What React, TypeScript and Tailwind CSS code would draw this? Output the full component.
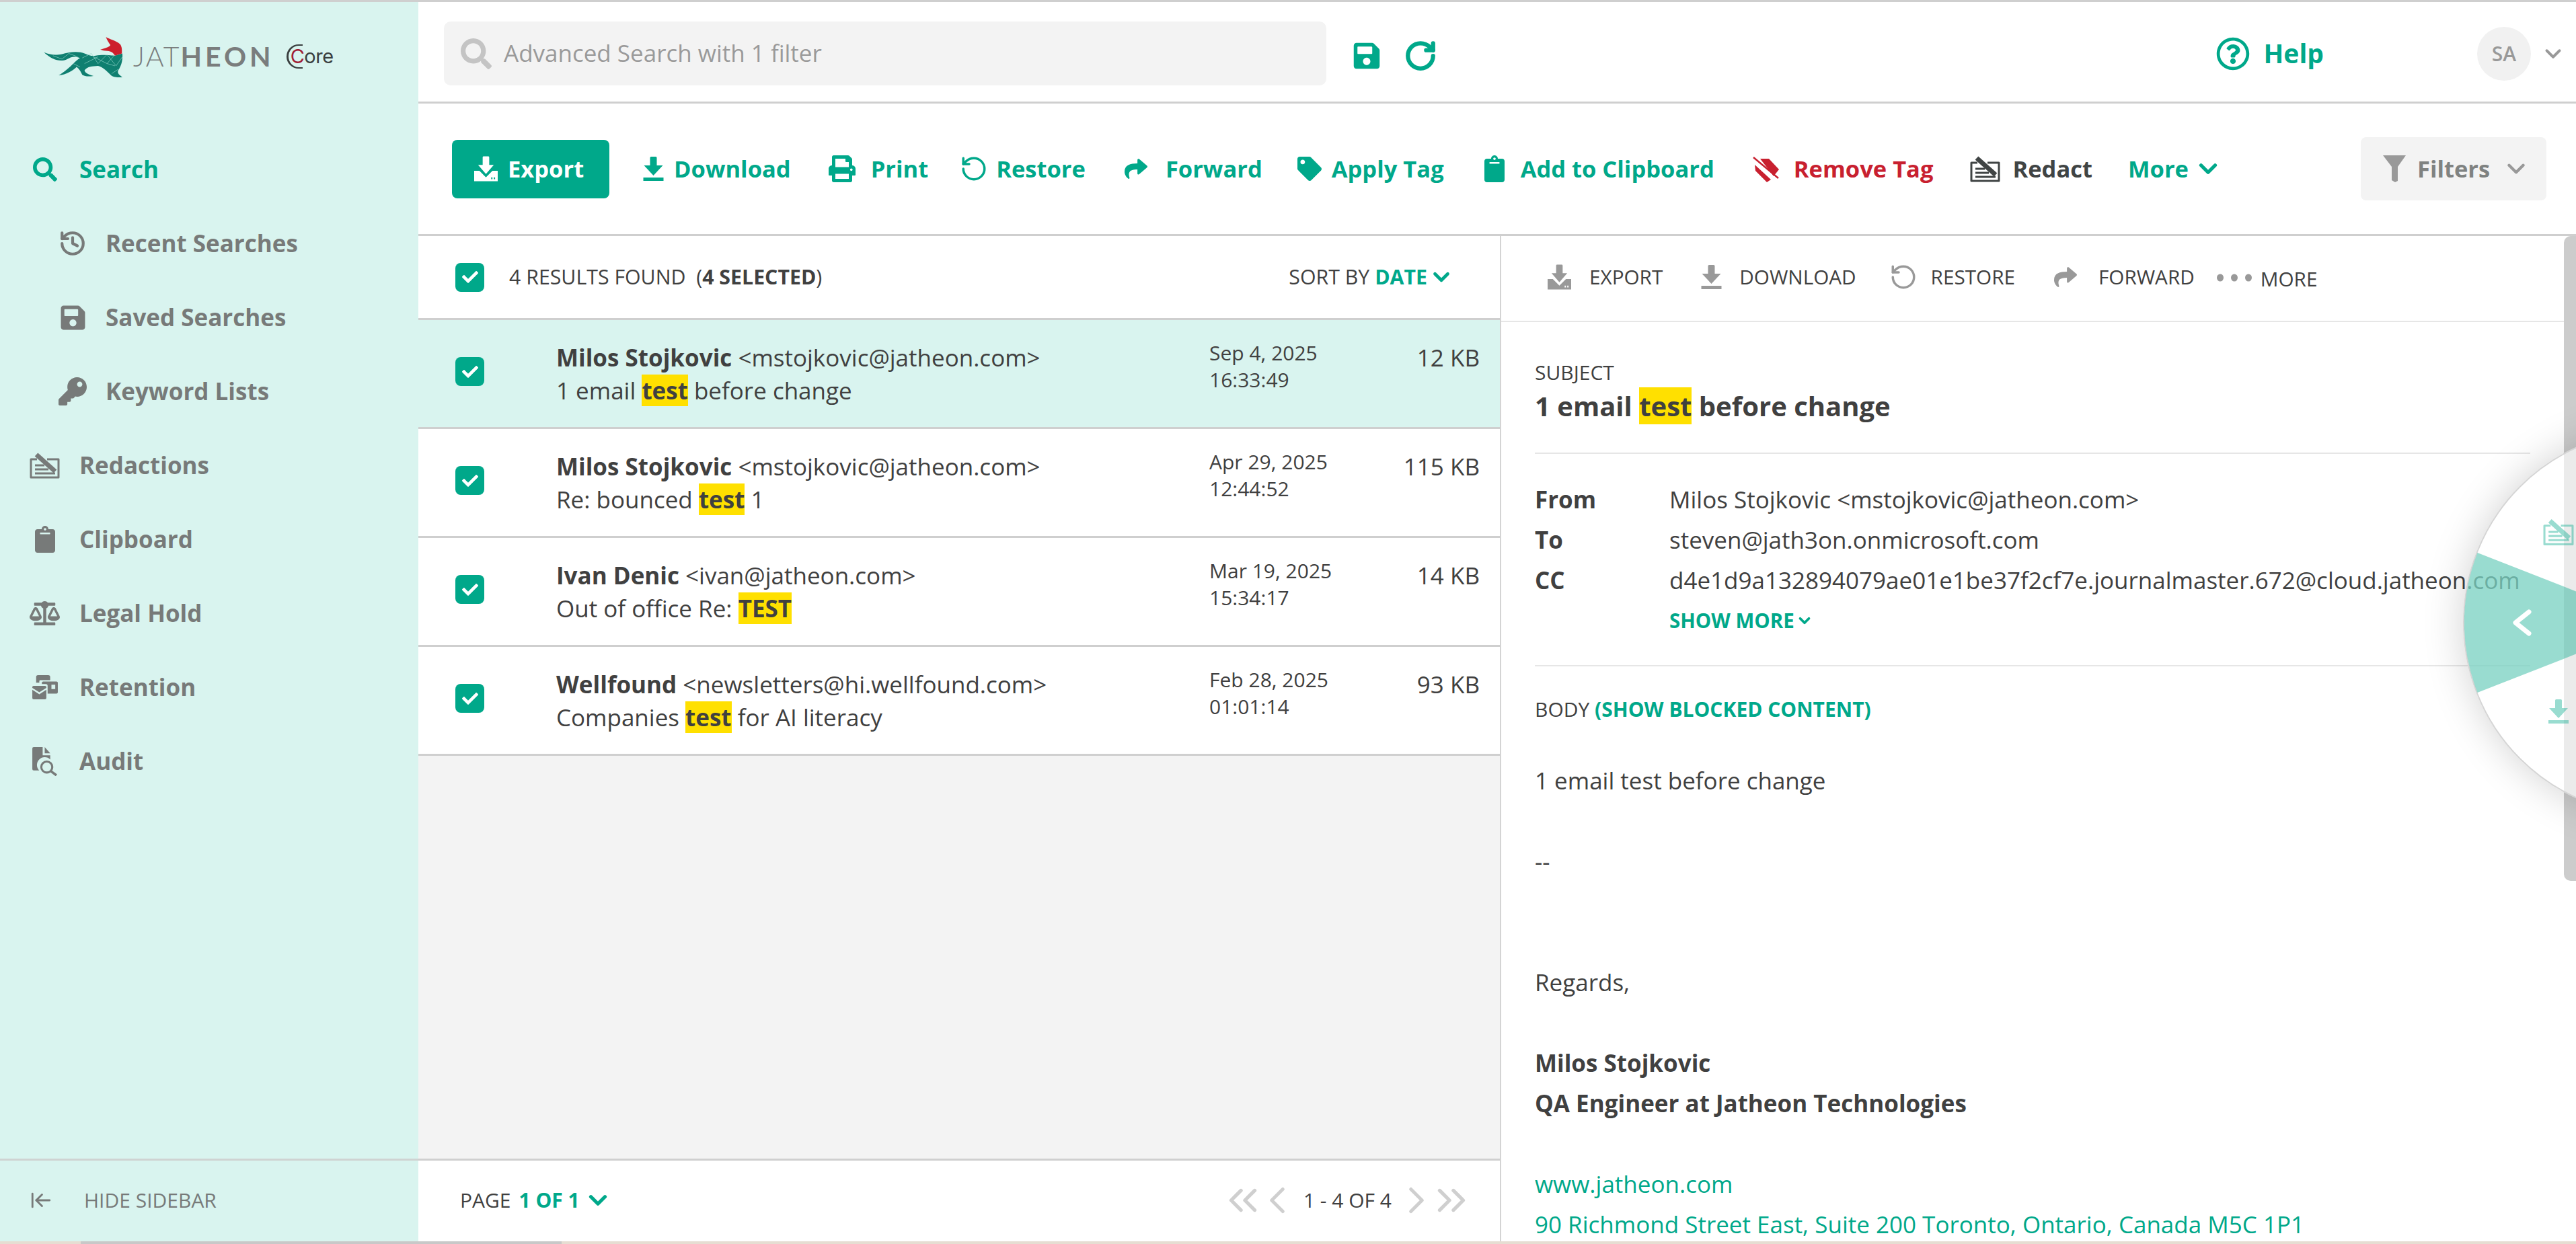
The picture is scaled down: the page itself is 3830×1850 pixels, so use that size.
import React from "react";
import { ChevronDown, ChevronLeft, ChevronRight, ChevronsLeft, ChevronsRight, History, RotateCcw, RotateCw, ArrowLeftToLine } from "lucide-react";
import { FaSearch, FaSave, FaKey, FaClipboard, FaBalanceScale, FaPrint, FaShare, FaTag, FaRegQuestionCircle, FaCheck } from "react-icons/fa";

type IP = { className?: string };

const ExportIcon = ({ className }: IP) => (
  <svg viewBox="0 0 36 38" className={className} fill="currentColor">
    <path fillRule="evenodd" d="M0 22h8l10 10 10-10h8v16H0zM26 32v3h2v-3zM30 32v3h2v-3z" />
    <path d="M13 1.5a1.5 1.5 0 0 1 1.5-1.5h7A1.5 1.5 0 0 1 23 1.500V13h7L18 27 6 13h7z" />
  </svg>
);
const DownloadIcon = ({ className }: IP) => (
  <svg viewBox="0 0 30 36" className={className} fill="currentColor">
    <path d="M10 1.500A1.500 1.500 0 0 1 11.500 0h7A1.500 1.500 0 0 1 20 1.500V13h9L15 28 1 13h9zM0 31h30v5H0z" />
  </svg>
);
const RedactIcon = ({ className }: IP) => (
  <svg viewBox="0 0 45 40" className={className} fill="none" stroke="currentColor">
    <path d="M11 11H2v27h41V11H26" strokeWidth="3" strokeLinejoin="round" />
    <path d="M10 4l28 25" strokeWidth="7" />
    <path d="M8 20h14M8 26h20M8 32h30" strokeWidth="3" />
  </svg>
);
const RemoveTagIcon = ({ className }: IP) => (
  <svg viewBox="0 0 40 39" className={className} fill="currentColor">
    <path d="M12 4h13l15 16-8 10z" />
    <path d="M4 13l24 22-6 4-17-17z" />
    <path d="M2 2l37 31" stroke="currentColor" strokeWidth="2.5" />
  </svg>
);
const RetentionIcon = ({ className }: IP) => (
  <svg viewBox="0 0 40 38" className={className} fill="currentColor">
    <path d="M6 3a3 3 0 0 1 3-3h16a3 3 0 0 1 3 3v5H12a2 2 0 0 0-1 1v3H6z" />
    <path fillRule="evenodd" d="M15 12a2 2 0 0 1 2-2h21a2 2 0 0 1 2 2v15a2 2 0 0 1-2 2H24V17a3 3 0 0 0-3-3h-6zM30 15v7h6v-7z" />
    <path d="M0 23l11 7 11-7v13a2 2 0 0 1-2 2H2a2 2 0 0 1-2-2zM2 17h18a2 2 0 0 1 2 2v1l-11 7-11-7v-1a2 2 0 0 1 2-2z" />
  </svg>
);
const AuditIcon = ({ className }: IP) => (
  <svg viewBox="0 0 36 42" className={className} fill="currentColor">
    <path d="M0 2a2 2 0 0 1 2-2h13v12h11v6a11 11 0 0 0-16 16H2a2 2 0 0 1-2-2z" />
    <path d="M18 0l8 9h-8z" />
    <circle cx="21" cy="29" r="8" fill="none" stroke="currentColor" strokeWidth="3" />
    <path d="M27 35l8 6" stroke="currentColor" strokeWidth="3.500" />
  </svg>
);
const FunnelIcon = ({ className }: IP) => (
  <svg viewBox="0 0 34 40" className={className} fill="currentColor">
    <path d="M0 0h34L22 17v21l-4 2-5-3V17z" />
  </svg>
);
const Dots = ({ className }: IP) => (
  <svg viewBox="0 0 52 14" className={className} fill="currentColor">
    <ellipse cx="5" cy="7" rx="5" ry="5.500" />
    <ellipse cx="26" cy="7" rx="5" ry="5.500" />
    <ellipse cx="47" cy="7" rx="5" ry="5.500" />
  </svg>
);

const Checkbox = ({ className = "" }: { className?: string }) => (
  <div className={`flex h-[43px] w-[43px] shrink-0 items-center justify-center rounded-[8px] bg-[#00a88a] text-white ${className}`}>
    <FaCheck className="h-[24px] w-[26px]" />
  </div>
);

const Mark = ({ children }: { children: React.ReactNode }) => (
  <mark className="bg-[#ffe000] font-bold text-[#404040]">{children}</mark>
);

const Logo = () => (
  <div className="flex items-center pl-[62px] pt-[12px]">
    <svg viewBox="60 30 370 200" className="mt-[2px] h-[67px] w-[124px] shrink-0">
      <path
        d="M70 110C100 122 120 124 150 118C180 108 225 104 250 115C270 124 285 128 300 125C330 118 370 124 385 125L418 115C420 140 416 165 400 190C396 198 397 207 418 220C395 222 375 220 368 212C355 200 330 172 310 170C285 172 262 172 250 190C252 200 262 208 290 215C270 218 252 218 240 210C235 200 228 185 215 175C200 190 170 210 135 212C160 198 185 175 205 155C215 145 225 138 230 135C205 125 190 130 170 142C140 155 100 140 70 110Z"
        fill="#0f7f70"
      />
      <path
        d="M110 125l40 15 30-25 40 15M240 135l40-20 30 45 40-40 40 50 28-40M290 130l60 30 35-40M250 160l60-30M200 160l30 15M385 170l-35-10M370 205l30-20"
        stroke="#8fd3c8"
        strokeWidth="2"
        fill="none"
      />
      <path d="M345 42C360 52 390 58 408 74C417 86 416 100 416 115L385 125C378 112 368 105 352 104C340 103 330 102 320 98C335 94 360 88 365 78C358 68 350 56 345 42Z" fill="#cd1f2d" />
    </svg>
    <span className="ml-[12px] font-['Lato',sans-serif] text-[41px] leading-none tracking-[5px] text-[#7a7d7d]">
      <span className="font-light tracking-[2px]">JAT</span>
      <span className="font-bold">HEON</span>
    </span>
    <span className="relative ml-[24px] font-['Inter',sans-serif] text-[29px] leading-none tracking-[-0.5px] text-[#3a3f3f]">
      <span className="absolute left-[-6px] top-[-3px] h-[36px] w-[24px] rounded-l-full border-y-[2px] border-l-[3px] border-[#3a3f3f]" />
      <span className="text-[#a01d35]">C</span>ore
    </span>
  </div>
);

const nav = [
  { label: "Search", Icon: FaSearch, sub: false, active: true, ic: "h-[36px] w-[36px]" },
  { label: "Recent Searches", Icon: History, sub: true, ic: "h-[42px] w-[42px]" },
  { label: "Saved Searches", Icon: FaSave, sub: true, ic: "h-[41px] w-[41px]" },
  { label: "Keyword Lists", Icon: FaKey, sub: true, ic: "h-[42px] w-[42px]" },
  { label: "Redactions", Icon: RedactIcon, sub: false, ic: "h-[40px] w-[45px]" },
  { label: "Clipboard", Icon: FaClipboard, sub: false, ic: "h-[40px] w-[30px]" },
  { label: "Legal Hold", Icon: FaBalanceScale, sub: false, ic: "h-[36px] w-[45px]" },
  { label: "Retention", Icon: RetentionIcon, sub: false, ic: "h-[36px] w-[40px]" },
  { label: "Audit", Icon: AuditIcon, sub: false, ic: "h-[43px] w-[37px]" },
];

const Sidebar = () => (
  <aside className="flex w-[622px] shrink-0 flex-col bg-[#d9f4ef]">
    <div className="h-[194px]">
      <div className="pt-[34px]">
        <Logo />
      </div>
    </div>
    <nav className="flex-1">
      {nav.map((n) => (
        <div key={n.label} className={`flex h-[110px] items-center ${n.sub ? "pl-[87px]" : "pl-[44px]"}`}>
          <span className={`flex shrink-0 items-center justify-center ${n.sub ? "mr-[28px] w-[42px]" : "mr-[29px] w-[45px]"} ${n.active ? "text-[#00a88a]" : "text-[#777a79]"}`}>
            <n.Icon className={n.ic} {...(n.sub && n.label === "Recent Searches" ? { strokeWidth: 2.4 } : {})} />
          </span>
          <span className={`text-[35px] font-bold ${n.active ? "text-[#00a88a]" : "text-[#777a79]"}`}>{n.label}</span>
        </div>
      ))}
    </nav>
    <div className="flex h-[123px] items-center border-t-[3px] border-[#cfd3d2] pb-[3px] pl-[44px] text-[30px] text-[#777a79]">
      <ArrowLeftToLine className="h-[34px] w-[34px]" strokeWidth={2} />
      <span className="ml-[47px]">HIDE SIDEBAR</span>
    </div>
  </aside>
);

const TopBar = () => (
  <header className="flex h-[151px] shrink-0 items-center border-b-[3px] border-[#cfcfcf] pl-[38px] pt-[5px]">
    <div className="flex h-[95px] w-[1312px] items-center rounded-[10px] bg-[#f3f3f3] pl-[25px] text-[35px] text-[#9a9a9a]">
      <FaSearch className="h-[46px] w-[46px] text-[#c4c4c4]" />
      <span className="ml-[18px]">Advanced Search with 1 filter</span>
    </div>
    <FaSave className="ml-[38px] mt-[6px] h-[44px] w-[44px] text-[#00a88a]" />
    <RotateCw className="ml-[33px] mt-[6px] h-[50px] w-[50px] text-[#00a88a]" strokeWidth={3} />
    <div className="ml-auto flex items-center">
      <FaRegQuestionCircle className="h-[50px] w-[50px] text-[#00a88a]" />
      <span className="ml-[21px] text-[39px] font-bold text-[#00a88a]">Help</span>
      <div className="ml-[228px] flex h-[80px] w-[80px] items-center justify-center rounded-full bg-[#f1f1f1] text-[30px] font-semibold text-[#999]">SA</div>
      <ChevronDown className="ml-[14px] mr-[15px] h-[38px] w-[38px] text-[#999]" strokeWidth={2.5} />
    </div>
  </header>
);

const tools: { label: string; Icon: React.ComponentType<IP>; ic: string; ml: string; w: string; color: string }[] = [
  { label: "Download", Icon: DownloadIcon, ic: "h-[36px] w-[31px]", ml: "ml-[50px]", w: "mr-[15px]", color: "text-[#00a88a]" },
  { label: "Print", Icon: FaPrint, ic: "h-[40px] w-[40px]", ml: "ml-[56px]", w: "mr-[23px]", color: "text-[#00a88a]" },
  { label: "Restore", Icon: RotateCcw, ic: "h-[42px] w-[42px]", ml: "ml-[47px]", w: "mr-[12px]", color: "text-[#00a88a]" },
  { label: "Forward", Icon: FaShare, ic: "h-[34px] w-[36px]", ml: "ml-[57px]", w: "mr-[26px]", color: "text-[#00a88a]" },
  { label: "Apply Tag", Icon: FaTag, ic: "h-[36px] w-[36px]", ml: "ml-[52px]", w: "mr-[15px]", color: "text-[#00a88a]" },
  { label: "Add to Clipboard", Icon: FaClipboard, ic: "h-[40px] w-[30px]", ml: "ml-[60px]", w: "mr-[24px]", color: "text-[#00a88a]" },
  { label: "Remove Tag", Icon: RemoveTagIcon, ic: "h-[39px] w-[40px]", ml: "ml-[56px]", w: "mr-[22px]", color: "text-[#c8202f]" },
  { label: "Redact", Icon: RedactIcon, ic: "h-[40px] w-[45px]", ml: "ml-[55px]", w: "mr-[18px]", color: "text-[#404444]" },
];

const Toolbar = () => (
  <div className="flex h-[197px] shrink-0 items-center border-b-[3px] border-[#cfcfcf] pl-[50px] text-[34.5px] font-bold">
    <button className="flex h-[87px] w-[234px] items-center rounded-[8px] bg-[#00a88a] pl-[33px] text-white">
      <ExportIcon className="mr-[15px] h-[38px] w-[35px]" />
      Export
    </button>
    {tools.map((t) => (
      <div key={t.label} className={`flex items-center ${t.ml} ${t.color}`}>
        <t.Icon className={`${t.ic} ${t.w}`} />
        <span>{t.label}</span>
      </div>
    ))}
    <div className="ml-[53px] flex items-center text-[#00a88a]">
      More
      <ChevronDown className="ml-[8px] h-[42px] w-[42px]" strokeWidth={3} />
    </div>
    <div className="ml-auto mr-[44px] flex h-[94px] w-[276px] items-center rounded-[8px] bg-[#f3f3f3] pl-[33px] text-[#7f8281]">
      <FunnelIcon className="mr-[17px] h-[40px] w-[34px] text-[#999]" />
      Filters
      <ChevronDown className="ml-[18px] h-[42px] w-[42px] text-[#999]" strokeWidth={2.5} />
    </div>
  </div>
);

const rows = [
  { name: "Milos Stojkovic", email: "<mstojkovic@jatheon.com>", subject: <>1 email <Mark>test</Mark> before change</>, date: "Sep 4, 2025", time: "16:33:49", size: "12 KB", sel: true },
  { name: "Milos Stojkovic", email: "<mstojkovic@jatheon.com>", subject: <>Re: bounced <Mark>test</Mark> 1</>, date: "Apr 29, 2025", time: "12:44:52", size: "115 KB" },
  { name: "Ivan Denic", email: "<ivan@jatheon.com>", subject: <>Out of office Re: <Mark>TEST</Mark></>, date: "Mar 19, 2025", time: "15:34:17", size: "14 KB" },
  { name: "Wellfound", email: "<newsletters@hi.wellfound.com>", subject: <>Companies <Mark>test</Mark> for AI literacy</>, date: "Feb 28, 2025", time: "01:01:14", size: "93 KB" },
];

const ListPane = () => (
  <section className="flex w-[1610px] shrink-0 flex-col border-r-[2px] border-[#d4d4d4] bg-[#f3f3f3]">
    <div className="flex h-[125px] shrink-0 items-center border-b-[3px] border-[#cfcfcf] bg-white pl-[55px] pr-[76px] text-[30.3px]">
      <Checkbox />
      <span className="ml-[37px]">4 RESULTS FOUND&nbsp;&nbsp;(<b className="font-bold">4 SELECTED</b>)</span>
      <span className="ml-auto">SORT BY <b className="font-bold text-[#00a88a]">DATE</b></span>
      <ChevronDown className="ml-[2px] mr-[-8px] h-[38px] w-[38px] text-[#00a88a]" strokeWidth={3} />
    </div>
    <div className="flex-1">
      {rows.map((r, i) => (
        <div key={i} className={`box-border flex h-[162px] border-b-[3px] border-[#cfcfcf] pl-[55px] pr-[30px] ${r.sel ? "bg-[#d9f4ef]" : "bg-white"}`}>
          <Checkbox className="mt-[55px]" />
          <div className="ml-[107px] flex-1 whitespace-nowrap pt-[31px] text-[35px] leading-[49px]">
            <div><b className="font-bold">{r.name}</b> {r.email}</div>
            <div>{r.subject}</div>
          </div>
          <div className="w-[252px] pt-[29px] text-[30px] leading-[40px]">
            <div>{r.date}</div>
            <div>{r.time}</div>
          </div>
          <div className="w-[150px] whitespace-nowrap pt-[31px] text-right text-[35px] leading-[49px]">{r.size}</div>
        </div>
      ))}
    </div>
    <div className="flex h-[123px] shrink-0 items-center border-t-[3px] border-[#cfcfcf] bg-white pb-[3px] pl-[62px] pr-[37px] text-[30px]">
      <span>PAGE</span>
      <b className="ml-[12px] font-bold text-[#00a88a]">1 OF 1</b>
      <ChevronDown className="ml-[6px] h-[42px] w-[42px] text-[#00a88a]" strokeWidth={3} />
      <ChevronsLeft className="ml-auto h-[70px] w-[70px] text-[#cfcfcf]" strokeWidth={1.8} />
      <ChevronLeft className="ml-[-17px] h-[66px] w-[66px] text-[#cfcfcf]" strokeWidth={1.8} />
      <span className="ml-[6px]">1 - 4 OF 4</span>
      <ChevronRight className="ml-[4px] h-[66px] w-[66px] text-[#cfcfcf]" strokeWidth={1.8} />
      <ChevronsRight className="ml-[-16px] h-[70px] w-[70px] text-[#cfcfcf]" strokeWidth={1.8} />
    </div>
  </section>
);

const rtools: { label: string; Icon: React.ComponentType<IP & { strokeWidth?: number }>; ic: string; ml: string }[] = [
  { label: "EXPORT", Icon: ExportIcon, ic: "h-[38px] w-[35px] mr-[27px]", ml: "ml-0" },
  { label: "DOWNLOAD", Icon: DownloadIcon, ic: "h-[36px] w-[31px] mr-[26px]", ml: "ml-[57px]" },
  { label: "RESTORE", Icon: RotateCcw, ic: "h-[42px] w-[42px] mr-[20px]", ml: "ml-[49px]" },
  { label: "FORWARD", Icon: FaShare, ic: "h-[34px] w-[36px] mr-[31px]", ml: "ml-[57px]" },
];

const DetailPane = () => (
  <section className="flex min-w-0 flex-1 bg-white">
    <div className="min-w-0 flex-1">
      <div className="flex h-[128px] items-center border-b-[2px] border-[#e6e6e6] pb-[3px] pl-[69px] text-[29.7px] text-[#404040]">
        {rtools.map((t) => (
          <div key={t.label} className={`flex items-center ${t.ml}`}>
            <t.Icon className={`${t.ic} text-[#999]`} />
            {t.label}
          </div>
        ))}
        <Dots className="ml-[33px] mr-[13px] h-[14px] w-[52px] text-[#999]" />
        <span className="mt-[6px]">MORE</span>
      </div>
      <div className="pl-[50px] pr-[50px]">
        <div className="pt-[55px] text-[30px] leading-[40px]">SUBJECT</div>
        <div className="whitespace-nowrap pt-[2px] text-[40px] font-bold leading-[55px]">
          1 email <Mark>test</Mark> before change
        </div>
        <div className="mt-[42px] h-[2px] bg-[#e6e6e6]" />
        <div className="whitespace-nowrap pt-[38px] text-[35px] leading-[60px]">
          <div className="flex"><b className="w-[200px] font-bold">From</b><span>Milos Stojkovic &lt;mstojkovic@jatheon.com&gt;</span></div>
          <div className="flex"><b className="w-[200px] font-bold">To</b><span>steven@jath3on.onmicrosoft.com</span></div>
          <div className="flex"><b className="w-[200px] font-bold">CC</b><span>d4e1d9a132894079ae01e1be37f2cf7e.journalmaster.672@cloud.jatheon.com</span></div>
          <div className="flex items-center pl-[200px] text-[29.5px] font-bold text-[#00a88a]">SHOW MORE<ChevronDown className="ml-[2px] h-[26px] w-[26px]" strokeWidth={3.5} /></div>
        </div>
        <div className="mt-[36px] h-[2px] bg-[#e6e6e6]" />
        <div className="pt-[44px] text-[30px] leading-[40px]">BODY <b className="font-bold text-[#00a88a]">(SHOW BLOCKED CONTENT)</b></div>
        <div className="whitespace-nowrap pt-[56px] text-[35px] leading-[60px]">
          <div>1 email test before change</div>
          <div className="h-[60px]" />
          <div>--</div>
          <div className="h-[120px]" />
          <div>Regards,</div>
          <div className="h-[60px]" />
          <div className="font-bold">Milos Stojkovic</div>
          <div className="font-bold">QA Engineer at Jatheon Technologies</div>
          <div className="h-[60px]" />
          <div className="text-[#00a88a]">www.jatheon.com</div>
          <div className="text-[#00a88a]">90 Richmond Street East, Suite 200 Toronto, Ontario, Canada M5C 1P1</div>
        </div>
      </div>
    </div>
    <div className="w-[18px] shrink-0">
      <div className="h-[959px] rounded-l-[10px] bg-[#cccccc]" />
    </div>
  </section>
);

const Wheel = () => (
  <div className="absolute left-[3662px] top-[639px] h-[574px] w-[574px] rounded-full border-[2px] border-[#d5d5d5] bg-[rgba(255,255,255,0.6)] shadow-[0_0_60px_rgba(0,0,0,0.18)]">
    <svg viewBox="0 0 570 570" className="absolute inset-0 h-full w-full">
      <path d="M285 285L19.500 181A285 285 0 0 0 19.500 389Z" fill="rgba(0,168,138,0.4)" />
      <path d="M96 269l-20 16 20 16" fill="none" stroke="#fff" strokeWidth="7" strokeLinecap="round" strokeLinejoin="round" />
    </svg>
    <RedactIcon className="absolute left-[117px] top-[129px] h-[42px] w-[46px] text-[rgba(0,168,138,0.4)]" />
    <DownloadIcon className="absolute left-[125px] top-[399px] h-[36px] w-[30px] text-[rgba(0,168,138,0.4)]" />
  </div>
);

export default function App() {
  return (
    <div className="relative flex h-[1850px] w-[3830px] flex-col overflow-hidden bg-white font-['Open_Sans',sans-serif] text-[#404040]">
      <div className="h-[3px] shrink-0 bg-[#cfcfcf]" />
      <div className="flex min-h-0 flex-1">
        <Sidebar />
        <main className="flex min-w-0 flex-1 flex-col">
          <TopBar />
          <Toolbar />
          <div className="flex min-h-0 flex-1 overflow-hidden">
            <ListPane />
            <DetailPane />
          </div>
        </main>
      </div>
      <div className="flex h-[4px] shrink-0 bg-[#e6ddd2]">
        <div className="ml-[120px] w-[715px] bg-[#c8c8c8]" />
      </div>
      <Wheel />
    </div>
  );
}
